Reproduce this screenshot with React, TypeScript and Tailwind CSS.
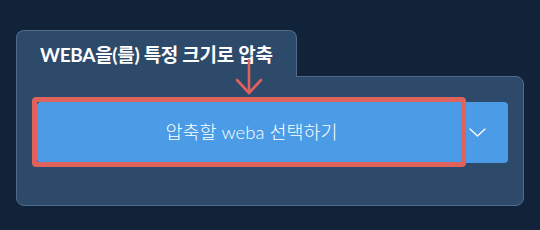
import React from 'react';

const ChevronDown = () => (
  <svg width="17" height="9" viewBox="0 0 17 9" fill="none" stroke="white" strokeWidth="1.3" strokeLinecap="round" strokeLinejoin="round">
    <path d="M1 1l7.5 7 7.5-7" />
  </svg>
);

const DownArrow = () => (
  <svg width="30" height="36" viewBox="0 0 30 36" fill="none" stroke="#e0615c" strokeWidth="2.6" strokeLinecap="round" strokeLinejoin="round">
    <path d="M15 1v33" />
    <path d="M3 21l12 13 12-13" />
  </svg>
);

export default function App() {
  return (
    <div
      className="w-[540px] h-[230px] bg-[#112338] pt-[30px] pl-[16px] relative overflow-hidden"
      style={{ fontFamily: 'Lato, "Noto Sans CJK KR", sans-serif' }}
    >
      <div className="relative z-10 w-[281px] h-[47px] -mb-px bg-[#2d4a6a] border-t border-l border-r border-[#4f6a8a] rounded-t-lg flex items-center pl-[23px]">
        <h2 className="text-white font-bold text-[19px] tracking-[-0.3px] leading-none mt-[1px]">
          WEBA을(를) 특정 크기로 압축
        </h2>
      </div>
      <div className="w-[508px] h-[130px] bg-[#2d4a6a] border border-[#4f6a8a] rounded-b-lg rounded-tr-lg pt-[25px] pl-[20px]">
        <div className="flex w-[471px] h-[61px]">
          <button className="flex-1 h-full bg-[#4b9be6] rounded-l-[4px] flex items-center justify-center text-white text-[18.5px] font-light">
            압축할 weba 선택하기
          </button>
          <button className="w-[42px] h-full bg-[#4b9be6] rounded-r-[4px] flex items-center justify-start pl-[3px]">
            <ChevronDown />
          </button>
        </div>
      </div>
      <div className="absolute z-20 left-[32px] top-[97px] w-[434px] h-[70px] border-[5px] border-[#df625d] rounded-[4px] pointer-events-none" />
      <div className="absolute z-20 left-[234px] top-[59px] pointer-events-none">
        <DownArrow />
      </div>
    </div>
  );
}
